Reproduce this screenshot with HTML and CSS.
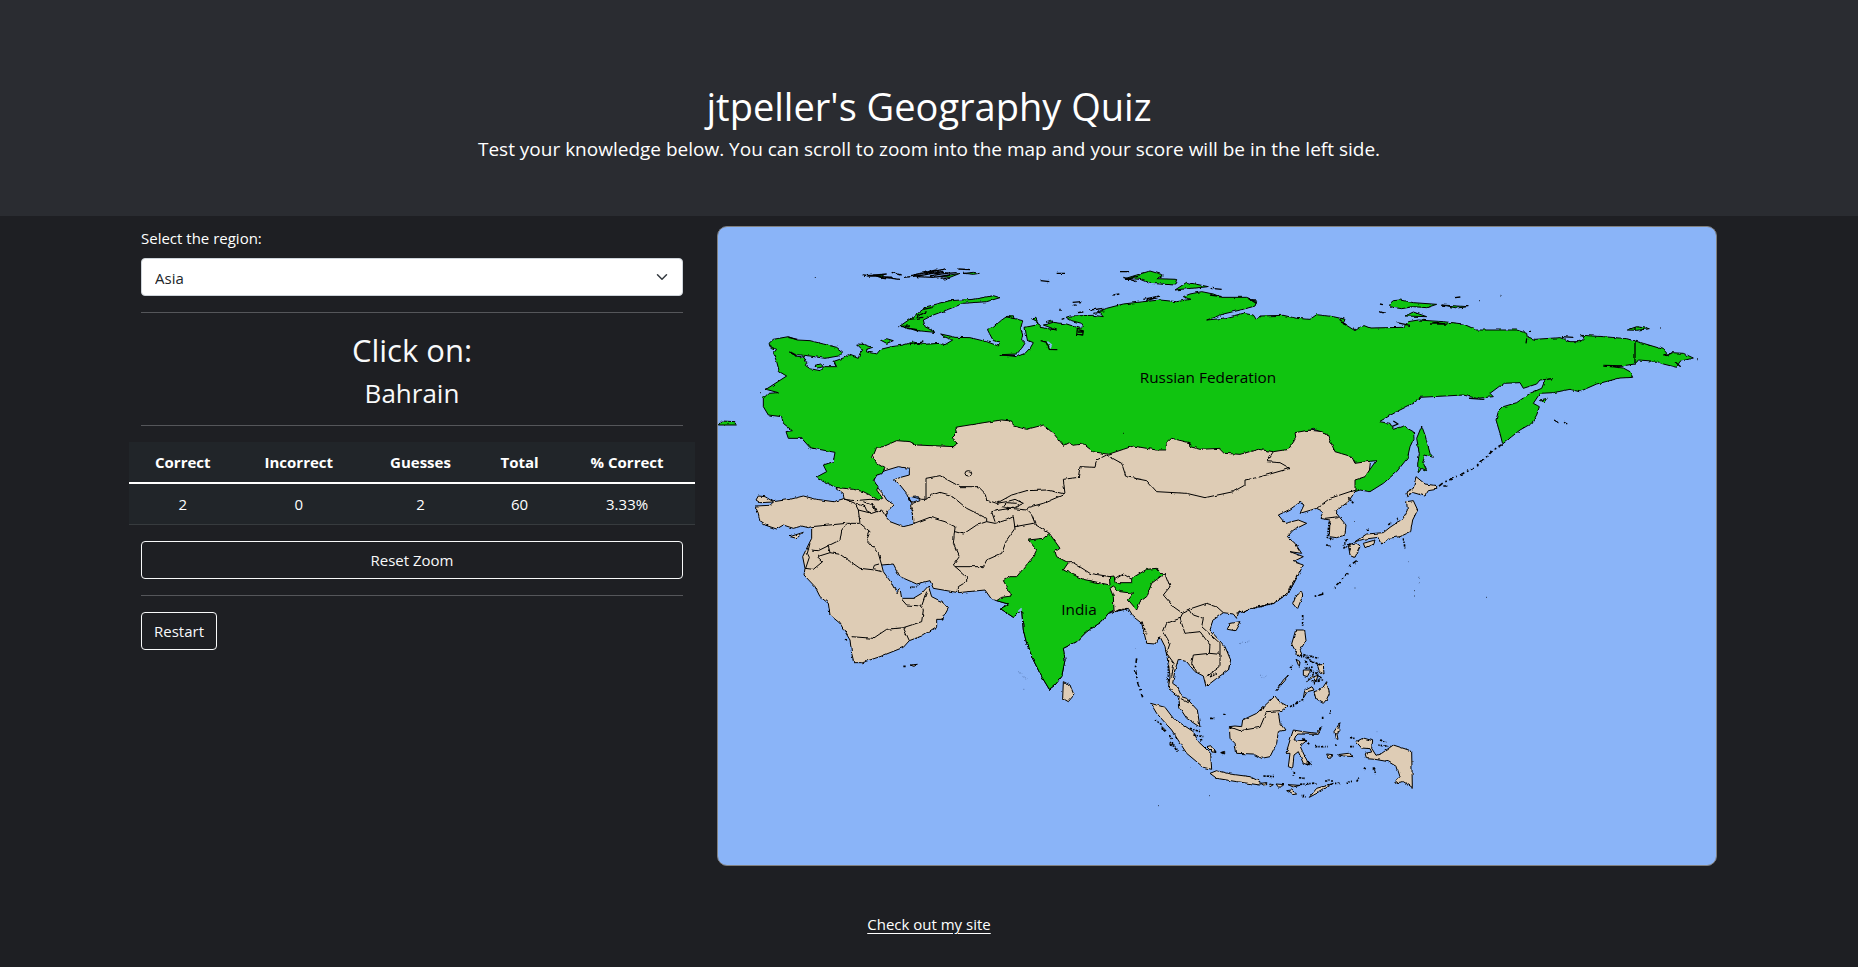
FILE: index.html
```html
<!DOCTYPE html>
<html lang="en">
<head>
<meta charset="utf-8">
<meta name="viewport" content="width=device-width, initial-scale=1">
<title>jtpeller's Geography Quiz</title>
<link rel="stylesheet" href="styles.css">
</head>
<body>
<header class="hero">
  <h1 class="hero-title">jtpeller's Geography Quiz</h1>
  <p class="hero-lead">Test your knowledge below. You can scroll to zoom into the map and your score will be in the left side.</p>
</header>
<main class="quiz">
  <section class="panel">
    <label class="region-label" for="region">Select the region:</label>
    <div class="select-wrap">
      <select class="region-select" id="region"><option>Asia</option></select>
      <svg class="chevron" viewBox="0 0 16 16" aria-hidden="true"><path d="m2 5 6 6 6-6"/></svg>
    </div>
    <hr class="rule">
    <h2 class="prompt">Click on:</h2>
    <h3 class="target">Bahrain</h3>
    <hr class="rule">
    <table class="score">
      <thead><tr><th class="c-correct">Correct</th><th class="c-incorrect">Incorrect</th><th class="c-guesses">Guesses</th><th class="c-total">Total</th><th>% Correct</th></tr></thead>
      <tbody><tr><td>2</td><td>0</td><td>2</td><td>60</td><td>3.33%</td></tr></tbody>
    </table>
    <button class="btn btn-wide" type="button">Reset Zoom</button>
    <hr class="rule">
    <button class="btn" type="button">Restart</button>
  </section>
  <section class="map-box">
    <svg class="map" viewBox="24 21 2994 1914" role="img" aria-label="Map of Asia">
      <defs>
        <filter id="coast" filterUnits="userSpaceOnUse" x="21" y="18" width="3000" height="1920" color-interpolation-filters="sRGB">
          <feTurbulence type="fractalNoise" baseFrequency="0.06" numOctaves="2" seed="4" result="n"/>
          <feDisplacementMap in="SourceGraphic" in2="n" scale="9" xChannelSelector="R" yChannelSelector="G"/>
        </filter>
      </defs>
      <g filter="url(#coast)">
        <path class="land" d="M375 802L400 820L402 836L370 845L320 838L280 828L240 838L190 845L165 830L145 828L138 840L150 848L190 846L180 856L135 858L145 880L150 905L165 915L200 927L220 915L250 925L275 918L295 923L305 920L305 955L295 975L278 1010L285 1045L282 1065L315 1100L330 1130L355 1150L360 1185L390 1210L420 1260L425 1300L432 1328L455 1328L510 1310L580 1282L598 1262L635 1248L680 1220L680 1198L695 1198L715 1162L695 1145L665 1130L655 1098L635 1120L610 1135L575 1135L570 1105L560 1120L545 1090L520 1055L515 1035L550 1032L570 1070L620 1092L660 1082L670 1105L745 1118L825 1110L845 1138L860 1142L895 1152L870 1165L910 1192L935 1170L940 1230L950 1270L970 1320L995 1370L1018 1408L1035 1395L1055 1370L1065 1320L1060 1285L1100 1265L1130 1235L1175 1205L1195 1180L1215 1175L1255 1165L1270 1190L1295 1210L1310 1270L1335 1272L1350 1250L1365 1280L1375 1330L1380 1370L1375 1405L1405 1430L1410 1465L1430 1495L1470 1522L1462 1470L1430 1435L1415 1430L1402 1400L1388 1390L1395 1350L1405 1318L1430 1325L1455 1355L1480 1368L1488 1400L1520 1375L1555 1350L1562 1320L1545 1280L1500 1230L1510 1200L1540 1178L1570 1182L1580 1195L1585 1180L1630 1165L1690 1150L1735 1120L1765 1065L1780 1035L1750 1025L1780 1010L1740 995L1775 1000L1755 970L1732 950L1750 930L1790 910L1765 900L1725 910L1705 885L1740 868L1770 847L1782 855L1770 880L1820 865L1840 875L1830 895L1860 900L1858 950L1880 953L1905 945L1908 915L1875 875L1915 845L1935 815L1975 780L1990 650L1000 550L520 600L420 750Z"/>
        <path class="sea" d="M525 752L565 740L598 745L598 765L572 772L550 780L570 795L590 820L605 850L600 862L610 880L612 912L580 920L540 905L527 890L537 870L550 853L530 840L518 820L500 800L492 780L500 765ZM595 830L620 828L630 842L608 850Z"/>
        <path class="land" d="M1060 1385L1080 1395L1092 1425L1075 1445L1058 1435ZM1560 1210L1590 1205L1575 1232L1552 1228ZM1775 1115L1778 1128L1762 1168L1748 1150L1758 1125ZM240 950L280 937L260 955ZM600 1335L622 1333L612 1339ZM2118 770L2145 792L2180 797L2180 808L2155 812L2145 828L2110 818L2090 830L2088 818L2110 805ZM2090 845L2110 842L2123 870L2108 900L2102 935L2070 950L2035 955L2015 972L2005 952L1960 958L1935 965L1970 942L2020 938L2040 922L2080 895L2092 870ZM1960 970L1995 960L1990 972L1965 983ZM1915 975L1935 968L1950 980L1935 1012L1920 1005ZM1757 1230L1784 1230L1788 1262L1770 1290L1775 1302L1768 1310L1758 1296L1745 1272ZM1758 1318L1770 1325L1768 1342ZM1780 1350L1802 1350L1792 1370L1780 1366ZM1822 1334L1840 1334L1842 1362L1828 1355ZM1790 1385L1810 1358L1808 1372ZM1812 1370L1824 1366L1816 1390ZM1780 1434L1784 1412L1806 1400L1812 1410L1792 1415ZM1812 1415L1835 1408L1850 1385L1858 1420L1850 1438L1840 1450L1818 1438ZM1698 1412L1720 1380L1735 1365L1725 1382ZM1558 1520L1575 1518L1595 1520L1598 1500L1640 1480L1695 1428L1708 1445L1732 1458L1705 1480L1710 1510L1725 1530L1705 1535L1700 1570L1680 1610L1655 1615L1630 1602L1580 1600L1575 1570L1560 1555ZM1322 1450L1365 1462L1390 1495L1450 1535L1465 1565L1502 1600L1505 1648L1480 1642L1430 1600L1385 1530L1340 1480ZM1490 1580L1502 1577L1518 1598L1505 1595ZM1532 1598L1544 1594L1544 1602ZM1500 1660L1520 1652L1560 1662L1620 1670L1650 1685L1650 1695L1580 1685L1520 1675ZM1652 1690L1668 1688L1664 1697ZM1676 1692L1690 1694L1680 1700ZM1698 1692L1725 1694L1706 1702ZM1734 1694L1770 1696L1750 1701ZM1730 1712L1745 1710L1760 1722L1748 1724ZM1798 1732L1820 1705L1870 1690L1830 1715ZM1740 1560L1750 1530L1780 1535L1820 1540L1835 1520L1825 1543L1760 1542L1752 1560L1790 1562L1770 1578L1785 1610L1798 1635L1780 1630L1765 1595L1752 1605L1748 1645L1735 1640L1740 1600L1728 1600ZM1890 1508L1886 1525L1894 1530L1880 1538L1884 1558L1876 1556L1872 1535ZM1883 1604L1915 1600L1932 1610L1900 1608ZM1850 1602L1868 1604L1866 1611L1854 1612ZM1356 1520L1368 1532L1358 1532ZM1380 1565L1390 1578L1380 1576ZM1938 1565L1960 1554L1988 1562L1985 1585L1998 1606L2015 1600L2050 1575L2105 1593L2107 1702L2080 1685L2050 1690L2070 1670L2060 1640L2035 1625L1995 1618L1970 1616L1965 1600L1985 1596L1980 1586L1955 1584Z"/>
        <path class="border" d="M305 920L410 910L450 910L445 870L435 850L402 836M402 838L435 842L480 838L505 840M440 852L465 860L470 872L485 880M460 845L485 855L500 875M445 870L485 880L515 870L528 890M305 990L325 992L390 960L395 930L415 910M355 978L360 998L322 1010L338 1025L310 1048L285 1045M300 970L292 1000L298 1012L287 1045M360 998L390 1003L450 1045L495 1050L515 1055M490 1045L493 1036L507 1032M450 910L480 935L470 960L505 1000L515 1035M425 1250L490 1255L530 1228L580 1223L598 1262M580 1223L635 1205L640 1170L635 1158L590 1155L575 1138M635 1158L650 1115M612 910L660 892L705 905L735 920L730 970L748 1010L730 1035L770 1070L770 1085L745 1100L745 1118M735 935L760 942L800 915L830 905L855 910L890 900L910 890L915 925L890 960L875 1000L830 1020L820 1040L735 1040M915 920L970 910L1018 940M648 838L648 775L690 767L750 800L805 800L825 820L830 840L860 850L905 825L950 812L1010 810L1065 822L1060 778L1105 772L1110 740L1155 742L1160 720L1190 705L1235 730L1248 770L1310 782L1340 815L1430 820L1485 833L1570 815L1605 795L1605 780L1645 772L1740 745L1710 728L1670 725L1690 695M605 830L635 838L648 838L665 825L690 817L720 825L740 840L770 865L830 895L830 905M1065 822L1000 850L955 862L950 870L900 865L870 870L845 875L855 905M950 870L965 885L975 910M860 850L890 845L915 838L940 850L910 865L875 860L890 848L920 850M765 760a10 8 0 1 0 20 0a10 8 0 1 0-20 0M1820 865L1860 835L1920 815L1935 810M1845 895L1885 890M1075 1028L1090 1028L1140 1060L1200 1070M1212 1080L1240 1062L1265 1078M1358 1065L1365 1060L1380 1100L1360 1125L1390 1160L1418 1180L1410 1195L1370 1210L1360 1235L1380 1270L1370 1300L1392 1330L1385 1370M1410 1195L1425 1240L1470 1235L1500 1275L1498 1300L1450 1305L1445 1330L1460 1355M1418 1180L1440 1170L1450 1185L1480 1195L1475 1220L1530 1270L1530 1340L1490 1370M1498 1300L1530 1303M1430 1170L1490 1150L1520 1160L1540 1178M1402 1430L1435 1448L1440 1438M1558 1520L1590 1532L1650 1522L1670 1475L1710 1472"/>
        <path class="found" d="M177 370L190 358L235 350L262 360L300 362L340 372L380 382L398 396L385 408L345 415L300 408L262 404L238 396L258 408L282 412L290 428L286 436L300 446L330 452L342 440L380 440L372 424L400 414L415 404L445 415L450 400L458 390L440 372L462 373L488 382L470 388L470 396L500 402L512 388L545 380L580 375L610 366L640 373L690 370L705 374L728 360L702 350L692 342L720 348L735 352L780 353L830 365L865 378L872 366L850 362L838 340L832 328L850 322L875 300L890 290L910 295L938 302L932 325L938 345L935 360L945 370L935 385L920 402L872 404L920 410L945 400L962 382L970 368L952 360L948 340L945 322L975 316L985 306L965 296L978 295L990 322L1040 330L1000 315L1030 307L1070 312L1110 325L1120 318L1115 310L1085 302L1068 292L1080 288L1150 286L1180 290L1165 275L1190 265L1240 252L1290 246L1350 240L1400 245L1440 238L1420 230L1440 222L1475 215L1510 222L1535 232L1610 232L1640 245L1635 258L1600 268L1540 282L1490 300L1540 295L1600 280L1630 285L1640 300L1650 288L1720 286L1760 295L1800 298L1820 284L1870 290L1905 298L1900 310L1935 332L1960 316L1980 324L2080 322L2095 305L2125 300L2200 305L2260 312L2300 330L2420 330L2450 340L2452 352L2475 358L2550 353L2580 365L2610 365L2620 358L2615 346L2680 350L2750 356L2800 370L2860 388L2875 405L2885 398L2920 400L2950 414L2910 424L2900 442L2860 432L2840 424L2785 420L2775 432L2720 440L2680 438L2740 444L2760 455L2768 472L2730 474L2660 492L2608 515L2580 508L2530 518L2490 520L2470 550L2488 560L2480 585L2465 610L2430 630L2405 650L2378 672L2370 640L2358 600L2365 575L2380 560L2420 548L2460 520L2495 505L2505 480L2528 476L2490 480L2480 492L2440 505L2430 488L2380 490L2340 520L2350 530L2300 535L2260 525L2130 532L2100 555L2060 575L2008 605L2040 610L2050 628L2080 618L2110 635L2112 655L2100 680L2092 715L2060 755L2020 790L1980 815L1950 810L1935 815L1935 780L1965 770L1998 722L1970 725L1935 730L1925 710L1875 695L1850 640L1810 628L1755 638L1758 655L1735 688L1690 695L1645 688L1590 703L1545 700L1530 685L1470 688L1440 680L1438 668L1385 655L1368 670L1370 690L1340 690L1310 685L1270 678L1240 688L1195 703L1150 695L1120 672L1090 676L1075 668L1060 676L1030 640L1000 615L950 628L910 618L905 603L875 600L840 605L735 622L740 640L725 655L742 670L735 680L620 675L600 665L560 662L520 680L500 682L488 712L500 730L525 745L515 762L500 765L490 782L505 800L500 810L518 835L505 840L480 825L460 815L430 808L375 802L350 788L318 772L350 755L340 735L370 725L375 697L300 683L275 655L235 655L228 635L247 632L220 610L215 590L175 585L160 560L160 535L175 520L205 518L168 508L230 468L208 455L200 425L190 400L200 388L180 380Z"/>
        <path class="found" d="M1018 940L1050 985L1035 995L1040 1010L1075 1028L1060 1050L1120 1078L1200 1095L1198 1070L1212 1068L1215 1088L1265 1088L1265 1075L1310 1048L1340 1045L1358 1065L1325 1090L1310 1130L1290 1145L1280 1170L1255 1140L1270 1120L1230 1115L1210 1098L1200 1105L1210 1130L1212 1172L1195 1180L1175 1205L1130 1235L1100 1265L1060 1285L1065 1320L1055 1370L1035 1395L1018 1408L995 1370L970 1320L950 1270L940 1230L935 1170L910 1192L870 1165L895 1152L860 1142L875 1132L905 1128L890 1100L880 1082L900 1070L920 1070L970 1010L980 990L955 960L1000 955Z"/>
        <path class="found" d="M570 318L610 290L650 260L720 242L790 238L850 227L870 233L830 245L760 250L715 268L670 285L640 300L645 320L675 337L620 332ZM1248 175L1280 165L1320 153L1360 165L1340 176L1400 178L1395 195L1320 190L1290 178ZM1395 210L1430 187L1495 200ZM2038 252L2050 242L2070 240L2110 248L2180 253L2150 263L2110 260L2075 266L2048 262ZM2195 255L2275 260L2240 264ZM2085 288L2110 276L2150 290ZM2752 330L2780 320L2818 326L2780 331ZM515 362L530 356L550 362L530 370ZM25 615L35 603L75 605L80 615ZM2135 618L2145 645L2160 700L2170 712L2145 705L2138 725L2150 752L2135 745L2125 758L2123 735L2128 700L2120 655ZM315 436L332 432L340 440L325 444ZM890 290L910 287L912 296ZM2490 540L2512 535L2500 545ZM2532 600L2545 608ZM760 160L790 157L808 160L790 163ZM690 170L750 160L720 172ZM490 165L520 165L515 173ZM1005 306L1025 300L1028 306Z"/>
        <path class="inlet" d="M1012 365L1024 375L1020 385M1590 275L1620 268M2045 608L2060 620M935 1165L925 1175"/>
        <path class="line" d="M2775 365V432M2775 321V331M992 362L1008 366L1018 388L1042 389M1102 328L1120 333L1118 345L1100 343ZM1104 336h14M1245 178L1290 168M1240 172L1280 185M315 173h2M458 165L520 170L548 172M470 168L530 162M505 170L570 178M545 157L572 165M585 172L640 165M610 165L680 150M640 160L700 148L708 146M650 158L690 162L740 158M620 170L670 172L720 165M690 178L720 174M745 147L780 149M680 155L720 160M635 166L700 154M645 163L690 156M660 168L705 160M992 182L1018 185M1040 160h25M1230 155h28M1210 225L1228 222M1088 247L1114 245M1090 254l10 2M1048 268h4M1055 298l8-3M1300 238L1350 228M1310 242L1340 233M1505 205L1535 208M1500 225L1535 230M1615 235L1640 250M1622 240L1640 240M1100 278L1120 276M1140 270L1180 265M1150 280L1180 275M2010 252l8 2M2010 275l14 5M2235 233l16-2M2307 242h2M2372 226h2M2440 333h2M2460 334h3M2850 324h2M2962 419h2M2562 607l10 5M2060 308L2100 316M2170 308L2210 312L2160 312M2555 350L2590 352M2680 436L2740 438M2450 358l-2 12M2860 405L2885 400M2895 425L2912 440M1240 640h2M600 374L640 366M1890 298L1905 316M2050 603L2064 612L2045 620M150 518h2M565 320L600 318M620 290L650 275M640 268L668 262M600 298L640 292M590 325L630 330M2280 535L2320 538M872 405L915 406M235 352L262 358M240 397L260 407"/>
        <path class="isles" d="M2378 674L2350 690L2320 720L2290 745L2240 770L2200 788L2182 802M2200 798h12M1915 1060L1890 1085L1872 1102M1940 1022L1915 1040M1840 1122L1810 1130M1280 1315L1276 1345L1282 1385L1290 1408L1298 1432"/>
        <path class="scatter" d="M2080 955L2085 985M1778 1185v35M1910 958l-10 20M2035 915l8-8M2060 898l6-4M1970 930l8-4M1848 975l16 2M1335 1500l20 14M1355 1525l12 10M1378 1545l6 12M1385 1568l18 28M1440 1525l30 10M1450 1545l30 5M1470 1560l8-2M1500 1495l15 0M1540 1480l8 3M1535 1598h10M1770 1693l50-4M1845 1683h24M1875 1690l14 0M1905 1688l24-4M1940 1685l8-14M1960 1645l6 4M1990 1645l4 18M1994 1645l-2 18M2010 1560l18 6M2005 1575l30 4M1920 1552l16 4M1875 1575h8M1920 1580h12M1815 1580l38 0M1780 1555l18 18M1788 1635l16-10M1790 1625l18 12M1750 1655v12M1770 1673l14 2M1740 1460l20-10M1758 1448l22-10M1838 1490v10M1860 1470v12M1780 1304L1822 1314M1790 1312l18 14M1800 1322l30 12M1784 1322l8 14M1800 1348l24 16M1786 1345l26-4M1805 1385l28-6M1830 1370l10 14M1770 1305l24 10M1820 1352l8 22M1375 1320v70M1660 1668l35 2M1650 1472l12-8M1858 905L1852 952L1870 958M1900 985L1920 972L1920 995M1762 1065L1735 1118L1690 1150L1630 1165L1580 1180M1210 1175L1255 1165M1295 1205L1310 1240M1500 1370L1520 1362M485 850l15 20M405 1258l6 4M580 1339h8M700 1195l-4 6M605 862l5 20M1775 1729l12 2M1930 850L1915 832M600 1103l20-3M1740 1345l8-8"/>
        <path class="dots" d="M2126 1072h2M2126 1088h2M2112 1112h2M2112 1128h2M1934 1104h2M2328 1132h2M1930 904h2M1440 1640h3M1348 1757h2M1498 1727h2M2095 1025h1"/>
        <path class="faint" d="M1590 1272l8 -6M1605 1268l14 -4M1650 1365l8 4M1660 1375l12 -6M925 1355l10 6M938 1370l14 6M940 1405h3M1275 1285h2M2000 1535h2"/>
      </g>
      <text class="country" x="1494" y="490">Russian Federation</text>
      <text class="country" x="1107" y="1185">India</text>
    </svg>
  </section>
</main>
<footer class="foot"><a class="foot-link" href="#">Check out my site</a></footer>
</body>
</html>
```
FILE: styles.css
```css
* { box-sizing: border-box; }
body {
  margin: 0;
  background: #1e1f23;
  color: #fff;
  font-family: "Open Sans", "Noto Sans", sans-serif;
  font-size: 15px;
  line-height: 24px;
}
.hero { background: #2a2c31; padding: 82px 16px 52px; text-align: center; }
.hero-title { margin: 0 0 4px; font-size: 38px; line-height: 48px; font-weight: 400; }
.hero-lead { margin: 0; font-size: 19px; line-height: 30px; }
.quiz {
  display: grid;
  grid-template-columns: minmax(0, 566fr) minmax(0, 1000fr);
  gap: 22px;
  max-width: 1600px;
  margin: 0 auto;
  padding: 10px 12px 0 0;
}
.panel { padding: 0 12px; }
.region-label { display: block; margin-bottom: 8px; }
.select-wrap { display: grid; align-items: center; }
.select-wrap > * { grid-area: 1 / 1; }
.region-select {
  appearance: none;
  width: 100%;
  height: 38px;
  padding: 2px 36px 0 13px;
  border: 1px solid #ced4da;
  border-radius: 4px;
  background: #fff;
  color: #212529;
  font: inherit;
}
.chevron {
  justify-self: end;
  width: 12px;
  height: 12px;
  margin-right: 15px;
  fill: none;
  stroke: #343a40;
  stroke-width: 2;
  stroke-linecap: round;
  stroke-linejoin: round;
  pointer-events: none;
}
.rule { height: 1px; margin: 16px 0; border: 0; background: #55565a; }
.prompt, .target { margin: 0; text-align: center; font-weight: 400; color: #f8f9fa; }
.prompt { margin-bottom: 8px; padding-top: 2px; font-size: 31px; line-height: 38px; }
.target { font-size: 26px; line-height: 32px; }
.score {
  width: calc(100% + 24px);
  margin: 0 -12px 16px;
  border-collapse: collapse;
  table-layout: fixed;
  background: #212529;
  text-align: center;
}
.score th, .score td { padding: 8px; }
.score th { border-bottom: 2px solid #fff; }
.score td { border-bottom: 1px solid #373b3e; }
.c-correct { width: 19%; }
.c-incorrect { width: 22%; }
.c-guesses { width: 21%; }
.c-total { width: 14%; }
.btn {
  height: 38px;
  padding: 0 12px;
  border: 1px solid #f8f9fa;
  border-radius: 4px;
  background: transparent;
  color: #f8f9fa;
  font: inherit;
}
.btn-wide { display: block; width: 100%; }
.map-box {
  align-self: start;
  border: 1px solid #808080;
  border-radius: 10px;
  overflow: hidden;
  background: #8ab4f8;
}
.map { display: block; width: 100%; }
.map path { stroke: #000; stroke-width: 3; stroke-linejoin: round; }
.map .land { fill: #deccb5; }
.map .found { fill: #10c410; }
.map .sea { fill: #8ab4f8; }
.map .inlet { fill: #8ab4f8; stroke: #8ab4f8; stroke-width: 5; }
.map .border, .map .line, .map .isles, .map .scatter, .map .faint { fill: none; }
.map .line { stroke-width: 4; }
.map .isles { stroke-width: 5; stroke-dasharray: 14 8 5 9; }
.map .scatter { stroke-width: 5; stroke-dasharray: 7 3 4 4; }
.map .faint { stroke: #5878b0; stroke-dasharray: 3 4; }
.country { font-size: 46px; text-anchor: middle; fill: #000; }
.foot { padding: 46px 16px 32px; text-align: center; }
.foot-link { color: #fff; text-underline-offset: 3px; }
```
